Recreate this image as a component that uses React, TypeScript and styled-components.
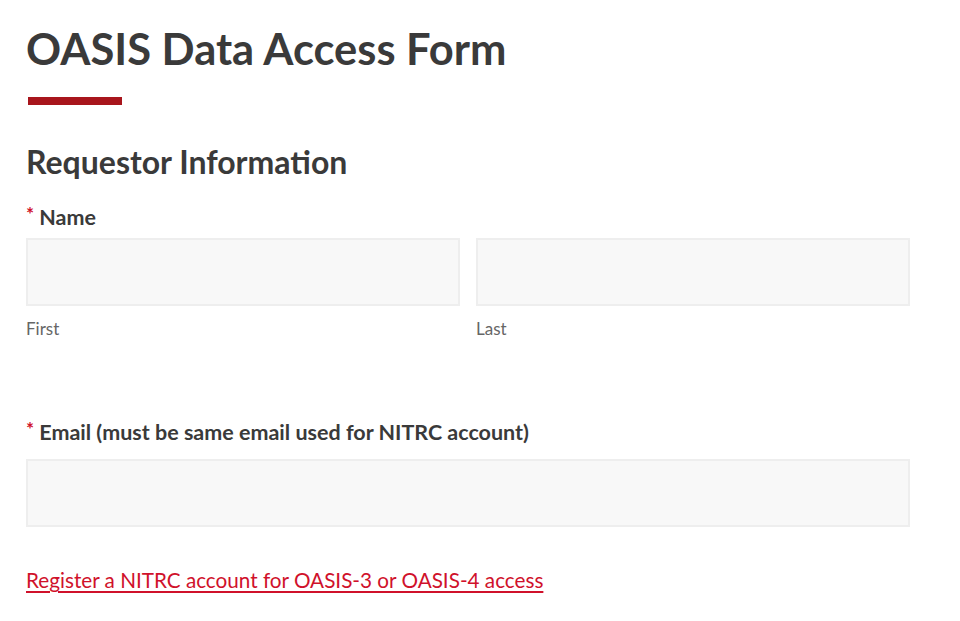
import React from 'react';
import styled, { createGlobalStyle } from 'styled-components';

const GlobalStyle = createGlobalStyle`
  body {
    margin: 0;
    background: #fff;
    font-family: Lato, "Noto Sans", sans-serif;
    color: #3a3a3a;
  }
`;

const App: React.FC = () => {
  return (
    <>
      <GlobalStyle />
      <Page>
        <Title>OASIS Data Access Form</Title>
        <Accent />
        <Section>Requestor Information</Section>
        <Field $gap={24}>
          <Label $space={8}>
            <Req>*</Req> Name
          </Label>
          <NameRow>
            <SubField>
              <Input type="text" />
              <Hint>First</Hint>
            </SubField>
            <SubField>
              <Input type="text" />
              <Hint>Last</Hint>
            </SubField>
          </NameRow>
        </Field>
        <Field $gap={80}>
          <Label $space={14}>
            <Req>*</Req> Email (must be same email used for NITRC account)
          </Label>
          <Input type="email" />
        </Field>
        <RegisterLink href="#">
          Register a NITRC account for OASIS-3 or OASIS-4 access
        </RegisterLink>
      </Page>
    </>
  );
};

export default App;

const Page = styled.div`
  width: 884px;
  padding: 22px 0 0 26px;
  box-sizing: content-box;
`;

const Title = styled.h1`
  margin: 0;
  font-size: 43.5px;
  line-height: 52px;
  font-weight: 700;
  color: #3a3a3a;
`;

const Accent = styled.div`
  width: 94px;
  height: 8px;
  margin: 23px 0 0 2px;
  background: #a8151c;
`;

const Section = styled.h2`
  margin: 39px 0 0;
  font-size: 32px;
  line-height: 36px;
  font-weight: 700;
  color: #3a3a3a;
`;

const Field = styled.div<{ $gap: number }>`
  margin-top: ${(p) => p.$gap}px;
`;

const Label = styled.div<{ $space: number }>`
  font-size: 21.5px;
  line-height: 26px;
  font-weight: 700;
  color: #3a3a3a;
  margin-bottom: ${(p) => p.$space}px;
`;

const Req = styled.span`
  color: #d0112b;
  font-size: 19px;
  line-height: 20px;
  vertical-align: top;
`;

const NameRow = styled.div`
  display: grid;
  grid-template-columns: 1fr 1fr;
  gap: 16px;
`;

const SubField = styled.div`
  display: flex;
  flex-direction: column;
`;

const Input = styled.input`
  display: block;
  width: 100%;
  height: 68px;
  box-sizing: border-box;
  background: #f8f8f8;
  border: 2px solid #eeeeee;
  outline: none;
  margin: 0;
`;

const Hint = styled.span`
  margin-top: 13px;
  font-size: 17px;
  line-height: 20px;
  color: #666;
`;

const RegisterLink = styled.a`
  display: inline-block;
  margin-top: 40px;
  font-size: 20.7px;
  line-height: 26px;
  color: #d0112b;
  text-decoration: underline;
  text-decoration-thickness: 2px;
  text-underline-offset: 3px;
`;
